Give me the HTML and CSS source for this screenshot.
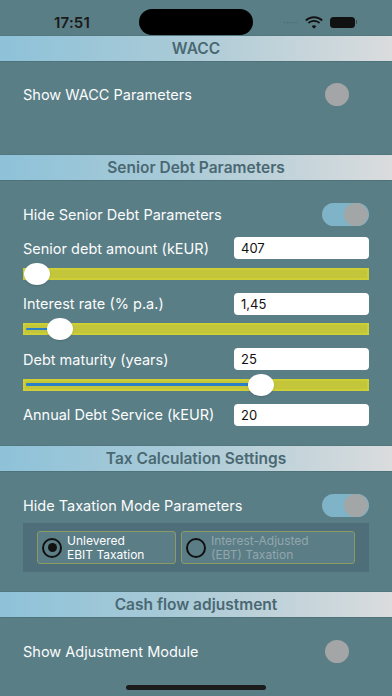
FILE: index.html
```html
<!DOCTYPE html>
<html>
<head>
<meta charset="utf-8">
<link rel="stylesheet" href="styles.css">
</head>
<body>
<div class="phone">
  <div class="status">
    <span class="time">17:51</span>
    <div class="island"></div>
    <div class="status-right">
      <span class="dots">·····</span>
      <svg class="wifi" width="18" height="13" viewBox="0 0 18 13">
        <path d="M9 2.2c2.9 0 5.5 1.1 7.5 3l1.3-1.4C15.5 1.6 12.4.3 9 .3S2.5 1.6.2 3.8l1.3 1.4c2-1.9 4.6-3 7.5-3z" fill="#111"/>
        <path d="M9 5.8c1.9 0 3.6.7 4.9 1.9l1.3-1.4C13.6 4.8 11.4 3.9 9 3.9s-4.6.9-6.2 2.4l1.3 1.4C5.4 6.5 7.1 5.8 9 5.8z" fill="#111"/>
        <path d="M9 9.3c.9 0 1.7.3 2.3.9L9 12.7 6.7 10.2c.6-.6 1.4-.9 2.3-.9z" fill="#111"/>
      </svg>
      <div class="battery"><div class="batt-body"></div><div class="batt-nub"></div></div>
    </div>
  </div>

  <section class="sec">
    <div class="hdr">WACC</div>
    <div class="body body-wacc">
      <div class="row">
        <span class="lbl">Show WACC Parameters</span>
        <div class="toggle"><div class="knob"></div></div>
      </div>
    </div>
  </section>

  <section class="sec">
    <div class="hdr">Senior Debt Parameters</div>
    <div class="body body-debt">
      <div class="row">
        <span class="lbl">Hide Senior Debt Parameters</span>
        <div class="toggle on"><div class="knob"></div></div>
      </div>
      <div class="field-row gap-top">
        <span class="lbl">Senior debt amount (kEUR)</span>
        <div class="field">407</div>
      </div>
      <div class="slider"><div class="track"><div class="thumb" style="left:-1px"></div></div></div>
      <div class="field-row">
        <span class="lbl">Interest rate (% p.a.)</span>
        <div class="field">1,45</div>
      </div>
      <div class="slider"><div class="track"><div class="fill" style="width:24px"></div><div class="thumb" style="left:22px"></div></div></div>
      <div class="field-row">
        <span class="lbl">Debt maturity (years)</span>
        <div class="field">25</div>
      </div>
      <div class="slider"><div class="track"><div class="fill" style="width:228px"></div><div class="thumb" style="left:223px"></div></div></div>
      <div class="field-row">
        <span class="lbl">Annual Debt Service (kEUR)</span>
        <div class="field">20</div>
      </div>
    </div>
  </section>

  <section class="sec">
    <div class="hdr">Tax Calculation Settings</div>
    <div class="body body-tax">
      <div class="row">
        <span class="lbl">Hide Taxation Mode Parameters</span>
        <div class="toggle on"><div class="knob"></div></div>
      </div>
      <div class="panel">
        <div class="opt opt1">
          <span class="radio checked"></span>
          <span class="opt-text"><span class="ln">Unlevered</span><span class="ln">EBIT Taxation</span></span>
        </div>
        <div class="opt opt2">
          <span class="radio"></span>
          <span class="opt-text dim"><span class="ln">Interest-Adjusted</span><span class="ln">(EBT) Taxation</span></span>
        </div>
      </div>
    </div>
  </section>

  <section class="sec">
    <div class="hdr">Cash flow adjustment</div>
    <div class="body body-cash">
      <div class="row">
        <span class="lbl">Show Adjustment Module</span>
        <div class="toggle"><div class="knob"></div></div>
      </div>
    </div>
  </section>

  <div class="home"></div>
</div>
</body>
</html>
```

FILE: styles.css
```css
* { box-sizing: border-box; }
html, body { margin: 0; padding: 0; }
body {
  width: 392px;
  height: 696px;
  overflow: hidden;
  background: #5a7e86;
  font-family: Inter, "Liberation Sans", sans-serif;
  color: #fff;
}
.phone {
  position: relative;
  width: 392px;
  height: 696px;
  display: flex;
  flex-direction: column;
}
.status {
  height: 35px;
  position: relative;
  display: flex;
  align-items: center;
}
.time {
  margin-left: 54px;
  margin-top: 9px;
  font-size: 15px;
  font-weight: 600;
  color: #1a1a1a;
  letter-spacing: 0.2px;
}
.island {
  position: absolute;
  left: 139px;
  top: 9px;
  width: 114px;
  height: 26px;
  border-radius: 13px;
  background: #000;
}
.status-right {
  margin-left: auto;
  margin-right: 35px;
  margin-top: 9px;
  display: flex;
  align-items: center;
  gap: 7px;
}
.dots {
  color: #4a6a70;
  font-size: 10px;
}
.battery { display: flex; align-items: center; gap: 1px; }
.batt-body {
  width: 25px;
  height: 11px;
  border-radius: 3.5px;
  background: #111;
}
.batt-nub {
  width: 1.5px;
  height: 4px;
  border-radius: 0 1px 1px 0;
  background: #444;
}
.hdr {
  height: 27px;
  display: flex;
  align-items: center;
  justify-content: center;
  background: linear-gradient(90deg, #8ec2d9 0%, #a9cad7 45%, #dadcdd 100%);
  color: #4a6872;
  font-size: 15.5px;
  font-weight: 600;
  border-bottom: 1px solid #4e737b;
  border-top: 1px solid #52777e;
}
.body { display: flex; flex-direction: column; padding: 0 23px; }
.body-wacc { padding-top: 21px; height: 92px; }
.body-debt { padding-top: 22px; height: 264px; }
.body-tax { padding-top: 22px; height: 119px; }
.body-cash { padding-top: 22px; }
.row {
  height: 23px;
  display: flex;
  align-items: center;
  justify-content: space-between;
}
.lbl { font-size: 14.5px; color: #fbfcfc; }
.toggle {
  width: 47px;
  height: 23px;
  border-radius: 12px;
  position: relative;
}
.toggle .knob {
  position: absolute;
  top: 0;
  left: 3px;
  width: 24px;
  height: 23px;
  border-radius: 50%;
  background: #a3a5a6;
}
.toggle.on { background: #7fb3c7; }
.toggle.on .knob { left: auto; right: 1px; background: #a2a6a7; }
.field-row {
  height: 22px;
  display: flex;
  align-items: center;
  justify-content: space-between;
}
.gap-top { margin-top: 11px; }
.field {
  width: 135px;
  height: 22px;
  border-radius: 4px;
  background: #fff;
  color: #111;
  font-size: 13px;
  display: flex;
  align-items: center;
  padding-left: 7px;
}
.slider { height: 33.5px; padding-top: 8.5px; }
.track {
  position: relative;
  height: 12px;
  background: #c3c63a;
  border: 2px solid #cdcf34;
}
.fill {
  position: absolute;
  left: 1px;
  top: 2.75px;
  height: 2.5px;
  background: #2a7fc6;
  border-radius: 1px;
}
.thumb {
  position: absolute;
  top: -7px;
  width: 26px;
  height: 22px;
  border-radius: 50%;
  background: #fff;
  box-shadow: 0 1px 2px rgba(0,0,0,0.15);
}
.panel {
  margin-top: 6px;
  height: 49px;
  background: #4e6e79;
  display: flex;
  gap: 5px;
  padding: 8px 14px;
}
.opt {
  height: 33px;
  border: 1px solid #8b9b63;
  border-radius: 3px;
  background: #5a7d86;
  display: flex;
  align-items: center;
  padding-left: 4px;
  gap: 5px;
}
.opt1 { width: 139px; }
.opt2 { width: 174px; }
.radio {
  width: 20px;
  height: 20px;
  border-radius: 50%;
  border: 2px solid #111;
  display: flex;
  align-items: center;
  justify-content: center;
  flex: none;
}
.radio.checked::after {
  content: "";
  width: 9px;
  height: 9px;
  border-radius: 50%;
  background: #111;
}
.opt-text { display: flex; flex-direction: column; font-size: 12px; color: #fff; }
.opt-text .ln { display: block; height: 13.5px; line-height: 13.5px; white-space: nowrap; }
.opt-text.dim { color: #93a7ac; }
.home {
  position: absolute;
  left: 126px;
  top: 685px;
  width: 140px;
  height: 5px;
  border-radius: 3px;
  background: #1c1c1c;
}
```
